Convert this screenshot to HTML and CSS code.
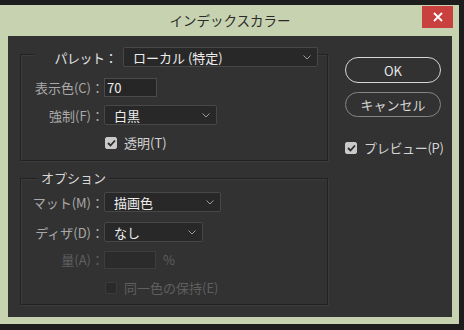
FILE: index.html
```html
<!DOCTYPE html>
<html lang="ja">
<head>
    <meta charset="UTF-8">
    <meta name="viewport" content="width=device-width, initial-scale=1.0">
    <title>インデックスカラー</title>
    <link rel="stylesheet" href="styles.css">
</head>
<body>
    <div class="window">
        <div class="titlebar">
            <span></span>
            <span class="title">インデックスカラー</span>
            <button class="close-btn">
                <svg width="10" height="10" viewBox="0 0 10 10"><path d="M1 1 L9 9 M9 1 L1 9" stroke="#fff" stroke-width="1.8"/></svg>
            </button>
        </div>

        <div class="content">
            <div class="groups">
                <!-- パレット -->
                <div class="group group-palette">
                    <div class="legend legend-palette">
                        <span class="label palette-label">パレット：</span>
                        <div class="select select-palette">
                            <span>ローカル (特定)</span>
                            <svg class="chevron" width="8" height="5" viewBox="0 0 8 5"><polyline points="0.5,0.5 4,4 7.5,0.5" fill="none" stroke="#9a9a9a" stroke-width="1"/></svg>
                        </div>
                    </div>
                    <div class="row row-colors">
                        <span class="label">表示色(C)：</span>
                        <div class="input input-colors">70</div>
                    </div>
                    <div class="row row-forced">
                        <span class="label">強制(F)：</span>
                        <div class="select select-forced">
                            <span>白黒</span>
                            <svg class="chevron" width="8" height="5" viewBox="0 0 8 5"><polyline points="0.5,0.5 4,4 7.5,0.5" fill="none" stroke="#9a9a9a" stroke-width="1"/></svg>
                        </div>
                    </div>
                    <div class="row row-check">
                        <span class="label"></span>
                        <span class="checkbox checked">
                            <svg width="9" height="8" viewBox="0 0 9 8"><polyline points="1,4 3.5,6.5 8,1.5" fill="none" stroke="#2c2c2c" stroke-width="1.8"/></svg>
                        </span>
                        <span class="check-text">透明(T)</span>
                    </div>
                </div>

                <!-- オプション -->
                <div class="group group-options">
                    <div class="legend legend-options">オプション</div>
                    <div class="row row-matte">
                        <span class="label">マット(M)：</span>
                        <div class="select select-matte">
                            <span>描画色</span>
                            <svg class="chevron" width="8" height="5" viewBox="0 0 8 5"><polyline points="0.5,0.5 4,4 7.5,0.5" fill="none" stroke="#9a9a9a" stroke-width="1"/></svg>
                        </div>
                    </div>
                    <div class="row row-dither">
                        <span class="label">ディザ(D)：</span>
                        <div class="select select-dither">
                            <span>なし</span>
                            <svg class="chevron" width="8" height="5" viewBox="0 0 8 5"><polyline points="0.5,0.5 4,4 7.5,0.5" fill="none" stroke="#9a9a9a" stroke-width="1"/></svg>
                        </div>
                    </div>
                    <div class="row row-amount disabled">
                        <span class="label">量(A)：</span>
                        <div class="input input-amount"></div>
                        <span class="unit">%</span>
                    </div>
                    <div class="row row-check disabled">
                        <span class="label"></span>
                        <span class="checkbox"></span>
                        <span class="check-text">同一色の保持(E)</span>
                    </div>
                </div>
            </div>

            <div class="side">
                <button class="btn btn-ok">OK</button>
                <button class="btn btn-cancel">キャンセル</button>
                <div class="preview">
                    <span class="checkbox checked">
                        <svg width="9" height="8" viewBox="0 0 9 8"><polyline points="1,4 3.5,6.5 8,1.5" fill="none" stroke="#2c2c2c" stroke-width="1.8"/></svg>
                    </span>
                    <span class="check-text">プレビュー(P)</span>
                </div>
            </div>
        </div>
    </div>
</body>
</html>
```

FILE: styles.css
```css
/* 全体 */
body {
    margin: 0;
    padding: 0;
    width: 464px;
    height: 330px;
    overflow: hidden;
    background-color: #1d1d1d;
    font-family: "Noto Sans CJK JP", "Noto Sans", sans-serif;
    font-size: 13px;
}

.window {
    width: 459px;
    margin-top: 5px;
    background-color: #c7d3b0;
    box-sizing: border-box;
    padding: 0 7px 7px 8px;
}

/* タイトルバー */
.titlebar {
    height: 31px;
    display: grid;
    grid-template-columns: 1fr auto 1fr;
    align-items: start;
}

.title {
    color: #2a2a2a;
    font-size: 13.5px;
    line-height: 31px;
}

.close-btn {
    justify-self: end;
    margin: 1px -1px 0 0;
    width: 31px;
    height: 22px;
    border: none;
    padding: 0;
    background-color: #c9413f;
    display: flex;
    align-items: center;
    justify-content: center;
}

/* 中身 */
.content {
    height: 281px;
    background-color: #323232;
    display: flex;
    padding: 0 11px 0 12px;
    box-sizing: border-box;
}

.groups {
    width: 308px;
    flex-shrink: 0;
}

.group {
    border: 1px solid #222;
    box-shadow: inset 1px 1px 0 #3b3b3b, 1px 1px 0 #3b3b3b;
    display: flex;
    flex-direction: column;
}

.group-palette {
    margin-top: 18px;
    height: 107px;
    box-sizing: border-box;
}

.group-options {
    margin-top: 17px;
    height: 127px;
    box-sizing: border-box;
}

.legend {
    background-color: #323232;
    align-self: flex-start;
}

.legend-palette {
    margin: -8px 0 0 13px;
    height: 20px;
    display: flex;
    align-items: center;
}

.legend-options {
    margin: -9px 0 0 17px;
    padding: 0 3px;
    height: 16px;
    line-height: 16px;
    color: #d8d8d8;
}

.row {
    display: flex;
    align-items: center;
}

.label {
    width: 83px;
    flex-shrink: 0;
    text-align: right;
    color: #a9a9a9;
    white-space: nowrap;
}

.palette-label {
    width: 83px;
    color: #e2e2e2;
    margin-right: 6px;
    letter-spacing: -0.5px;
}

/* 入力 */
.select {
    height: 20px;
    box-sizing: border-box;
    border: 1px solid #474747;
    border-radius: 2px;
    background-color: #282828;
    color: #ececec;
    display: flex;
    align-items: center;
    justify-content: space-between;
    padding: 0 6px 0 9px;
}

.select-palette {
    width: 195px;
}

.select-forced {
    width: 113px;
}

.select-matte {
    width: 117px;
}

.select-dither {
    width: 99px;
}

.input {
    height: 19px;
    box-sizing: border-box;
    border: 1px solid #4b4b4b;
    background-color: #262626;
    color: #ececec;
    padding: 0 2px;
    line-height: 17px;
}

.input-colors {
    width: 53px;
}

.input-amount {
    width: 52px;
    height: 18px;
    border-color: #3d3d3d;
    background-color: #2b2b2b;
}

.row-colors {
    margin-top: 11px;
}

.row-forced {
    margin-top: 8px;
}

.row-check {
    margin-top: 11px;
    height: 13px;
}

.row-matte {
    margin-top: 6px;
}

.row-dither {
    margin-top: 10px;
}

.row-amount {
    margin-top: 8px;
}

.group-options .row-check {
    margin-top: 12px;
}

.unit {
    margin-left: 7px;
}

.disabled .label,
.disabled .unit,
.disabled .check-text {
    color: #5f5f5f;
}

/* チェックボックス */
.checkbox {
    width: 12px;
    height: 12px;
    flex-shrink: 0;
    box-sizing: border-box;
    border-radius: 2px;
    border: 1px solid #3b3b3b;
    background-color: #2a2a2a;
    display: flex;
    align-items: center;
    justify-content: center;
    margin: 0 7px 0 1px;
}

.checkbox.checked {
    background-color: #c9c9c9;
    border-color: #c9c9c9;
}

.check-text {
    color: #d4d4d4;
    white-space: nowrap;
}

/* 右側 */
.side {
    margin-left: 17px;
    width: 96px;
    display: flex;
    flex-direction: column;
}

.btn {
    font-family: inherit;
    font-size: 13px;
    height: 26px;
    border-radius: 13px;
    background-color: #323232;
    padding: 0;
}

.btn-ok {
    margin-top: 21px;
    border: 1px solid #d6d6d6;
    color: #e6e6e6;
}

.btn-cancel {
    margin-top: 9px;
    height: 25px;
    border: 1px solid #858585;
    color: #d6d6d6;
}

.preview {
    margin-top: 21px;
    display: flex;
    align-items: center;
}

.preview .checkbox {
    margin: 0 7px 0 0;
}

.preview .check-text {
    letter-spacing: -0.3px;
}
```
